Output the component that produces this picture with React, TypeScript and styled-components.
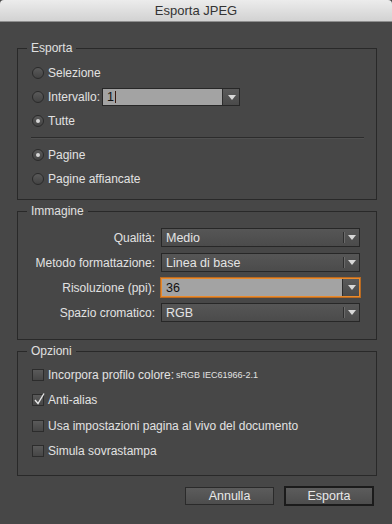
import styled, { createGlobalStyle } from "styled-components";

const GlobalStyle = createGlobalStyle`
  html, body {
    margin: 0;
    padding: 0;
    background: #474747;
  }
  body {
    font-family: "Liberation Sans", Arial, sans-serif;
    font-size: 12px;
    color: #e2e2e2;
  }
`

const Window = styled.div`
  width: 392px;
  height: 524px;
  display: flex;
  flex-direction: column;
  background: #474747;
  overflow: hidden;
`

const TitleBar = styled.div`
  height: 21px;
  flex: none;
  display: flex;
  align-items: center;
  justify-content: center;
  background: linear-gradient(#ececec, #d2d2d2);
  border-bottom: 1px solid #8e8e8e;
  border-radius: 4px 4px 0 0;
  color: #333333;
  font-size: 13px;
`

const Body = styled.div`
  display: flex;
  flex-direction: column;
  padding: 19px 15px 0 17px;
`

const Group = styled.fieldset`
  margin: 0;
  padding: 0;
  border: 1px solid #292929;
  min-width: 0;

  & + & {
    margin-top: 4px;
  }
`

const Legend = styled.legend`
  margin-left: 9px;
  padding: 0 4px;
  line-height: 14px;
  color: #e0e0e0;
`

const ExportBody = styled.div`
  display: flex;
  flex-direction: column;
  padding: 6px 12px 8px 14px;
`

const Row = styled.div<{ $h?: number }>`
  height: ${p => p.$h ?? 24}px;
  display: flex;
  align-items: center;
`

const Separator = styled.div`
  height: 1px;
  margin: 4px 0 5px -1px;
  background: #2c2c2c;
  box-shadow: 0 1px 0 #505050;
`

const Radio = styled.span<{ $on?: boolean }>`
  width: 10px;
  height: 10px;
  border-radius: 50%;
  border: 1px solid #2a2a2a;
  background: linear-gradient(#5a5a5a, #434343);
  display: flex;
  align-items: center;
  justify-content: center;
  flex: none;

  &::after {
    content: "";
    width: 4px;
    height: 4px;
    border-radius: 50%;
    background: #d6d6d6;
    display: ${p => (p.$on ? "block" : "none")};
  }
`

const Label = styled.span`
  margin-left: 4px;
  white-space: nowrap;
`

const ImageGrid = styled.div`
  display: grid;
  grid-template-columns: 124px 1fr;
  column-gap: 6px;
  grid-auto-rows: 25px;
  align-items: center;
  padding: 7px 16px 14px 13px;
`

const FieldLabel = styled.span`
  text-align: right;
  white-space: nowrap;
`

const Combo = styled.div<{ $light?: boolean; $focus?: boolean; $w?: number; $h?: number }>`
  display: flex;
  align-items: stretch;
  height: ${p => p.$h ?? 19}px;
  ${p => (p.$w ? `width: ${p.$w}px;` : "")}
  box-sizing: border-box;
  border: 1px solid ${p => (p.$focus ? "#e98a2c" : "#272727")};
  box-shadow: ${p => (p.$focus ? "0 0 0 1px #b86a22" : "none")};
  background: ${p => (p.$light ? "#a3a3a3" : "linear-gradient(#565656, #4b4b4b)")};
`

const ComboText = styled.span<{ $light?: boolean }>`
  flex: 1;
  display: flex;
  align-items: center;
  padding-left: 4px;
  color: ${p => (p.$light ? "#111111" : "#e4e4e4")};
  font-size: 12.5px;
`

const Caret = styled.span`
  width: 1px;
  height: 12px;
  margin-left: 1px;
  background: #3a1a10;
`

const ArrowPart = styled.div<{ $solid?: boolean }>`
  width: 16px;
  flex: none;
  display: flex;
  align-items: center;
  justify-content: center;
  position: relative;
  background: ${p => (p.$solid ? "linear-gradient(#5a5a5a, #4a4a4a)" : "transparent")};
  border-left: ${p => (p.$solid ? "1px solid #2c2c2c" : "none")};

  &::before {
    content: "";
    display: ${p => (p.$solid ? "none" : "block")};
    position: absolute;
    left: 0;
    top: 3px;
    bottom: 3px;
    width: 1px;
    background: #2e2e2e;
    box-shadow: 1px 0 0 #6a6a6a;
  }
`

const Arrow = styled.span`
  width: 0;
  height: 0;
  border-left: 4px solid transparent;
  border-right: 4px solid transparent;
  border-top: 5px solid #d8d8d8;
  margin-left: 1px;
`

const OptionsBody = styled.div`
  display: flex;
  flex-direction: column;
  padding: 4px 12px 11px 14px;
`

const Check = styled.span`
  width: 10px;
  height: 10px;
  border: 1px solid #2c2c2c;
  background: linear-gradient(#5a5a5a, #464646);
  flex: none;
  position: relative;
  display: flex;
  align-items: center;
  justify-content: center;

  svg {
    position: absolute;
    left: 0;
    top: -3px;
  }
`

const Small = styled.span`
  font-size: 9px;
  margin-left: 2px;
`

const ButtonRow = styled.div`
  display: flex;
  justify-content: flex-end;
  align-items: center;
  gap: 10px;
  margin-top: 10px;
  padding-right: 3px;
`

const Button = styled.button<{ $default?: boolean }>`
  width: ${p => (p.$default ? 90 : 89)}px;
  height: ${p => (p.$default ? 20 : 18)}px;
  padding: 0;
  border: ${p => (p.$default ? "2px solid #1b1b1b" : "1px solid #2a2a2a")};
  background: linear-gradient(#5c5c5c, #4d4d4d);
  color: #e8e8e8;
  font-family: "Liberation Sans", Arial, sans-serif;
  font-size: 12.5px;
`

function Dropdown({ value, light, focus }: { value: string; light?: boolean; focus?: boolean }) {
    return (
        <Combo $light={light} $focus={focus}>
            <ComboText $light={light}>{value}</ComboText>
            <ArrowPart $solid={light}><Arrow/></ArrowPart>
        </Combo>
    )
}

function CheckMark() {
    return (
        <svg width="14" height="14" viewBox="0 0 14 14">
            <path d="M2 8 L5 11.5 L11 1.5" fill="none" stroke="#e6e6e6" strokeWidth="1.4"/>
        </svg>
    )
}

export default function App() {
    return (
        <Window>
            <GlobalStyle/>
            <TitleBar>Esporta JPEG</TitleBar>
            <Body>
                <Group>
                    <Legend>Esporta</Legend>
                    <ExportBody>
                        <Row><Radio/><Label>Selezione</Label></Row>
                        <Row>
                            <Radio/><Label>Intervallo:</Label>
                            <Combo $light $w={138} $h={18} style={{marginLeft: 2}}>
                                <ComboText $light>1<Caret/></ComboText>
                                <ArrowPart $solid><Arrow/></ArrowPart>
                            </Combo>
                        </Row>
                        <Row><Radio $on/><Label>Tutte</Label></Row>
                        <Separator/>
                        <Row><Radio $on/><Label>Pagine</Label></Row>
                        <Row><Radio/><Label>Pagine affiancate</Label></Row>
                    </ExportBody>
                </Group>

                <Group>
                    <Legend>Immagine</Legend>
                    <ImageGrid>
                        <FieldLabel>Qualità:</FieldLabel>
                        <Dropdown value="Medio"/>
                        <FieldLabel>Metodo formattazione:</FieldLabel>
                        <Dropdown value="Linea di base"/>
                        <FieldLabel>Risoluzione (ppi):</FieldLabel>
                        <Dropdown value="36" light focus/>
                        <FieldLabel>Spazio cromatico:</FieldLabel>
                        <Dropdown value="RGB"/>
                    </ImageGrid>
                </Group>

                <Group>
                    <Legend>Opzioni</Legend>
                    <OptionsBody>
                        <Row $h={25.5}><Check/><Label>Incorpora profilo colore:</Label><Small>sRGB IEC61966-2.1</Small></Row>
                        <Row $h={25.5}><Check><CheckMark/></Check><Label>Anti-alias</Label></Row>
                        <Row $h={25.5}><Check/><Label>Usa impostazioni pagina al vivo del documento</Label></Row>
                        <Row $h={25.5}><Check/><Label>Simula sovrastampa</Label></Row>
                    </OptionsBody>
                </Group>

                <ButtonRow>
                    <Button>Annulla</Button>
                    <Button $default>Esporta</Button>
                </ButtonRow>
            </Body>
        </Window>
    )
}
